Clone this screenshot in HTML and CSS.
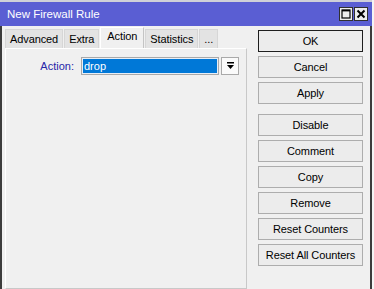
FILE: index.html
```html
<!DOCTYPE html>
<html>
<head>
<meta charset="utf-8">
<link rel="stylesheet" href="styles.css">
</head>
<body>
<div class="window">
  <div class="titlebar">
    <span class="title">New Firewall Rule</span>
    <div class="tb-buttons">
      <span class="tb-btn"><svg width="10" height="10" viewBox="0 0 10 10"><rect x="1" y="1" width="8" height="8" fill="none" stroke="#000" stroke-width="1.2"/><line x1="1" y1="1.6" x2="9" y2="1.6" stroke="#000" stroke-width="1.6"/></svg></span>
      <span class="tb-btn"><svg width="10" height="10" viewBox="0 0 10 10"><path d="M1.5 1.5 L8.5 8.5 M8.5 1.5 L1.5 8.5" stroke="#000" stroke-width="2"/></svg></span>
    </div>
  </div>
  <div class="body">
    <div class="left">
      <div class="tabs">
        <span class="tab">Advanced</span>
        <span class="tab">Extra</span>
        <span class="tab active">Action</span>
        <span class="tab">Statistics</span>
        <span class="tab">...</span>
      </div>
      <div class="panel">
        <div class="row">
          <span class="label">Action:</span>
          <div class="field">drop</div>
          <span class="drop-btn"><svg width="9" height="8" viewBox="0 0 9 8"><rect x="1" y="0" width="7" height="1.5" fill="#000"/><path d="M1 3 L8 3 L4.5 7 Z" fill="#000"/></svg></span>
        </div>
      </div>
    </div>
    <div class="right">
      <div class="btn default">OK</div>
      <div class="btn">Cancel</div>
      <div class="btn">Apply</div>
      <div class="btn group">Disable</div>
      <div class="btn">Comment</div>
      <div class="btn">Copy</div>
      <div class="btn">Remove</div>
      <div class="btn">Reset Counters</div>
      <div class="btn">Reset All Counters</div>
    </div>
  </div>
</div>
</body>
</html>
```

FILE: styles.css
```css
html, body {
  margin: 0;
  padding: 0;
}
body {
  background: #f4f4f4;
  font-family: "Liberation Sans", Arial, sans-serif;
  font-size: 11px;
  color: #000;
}
.window {
  width: 372px;
  height: 289px;
  box-sizing: border-box;
  border-top: 2px solid #cfd0d8;
  display: flex;
  flex-direction: column;
  overflow: hidden;
}
.titlebar {
  height: 24px;
  flex: none;
  background: #5a5ed3;
  display: flex;
  align-items: center;
  justify-content: space-between;
  padding: 0 4px 0 7px;
  color: #fff;
}
.title {
  font-size: 11.5px;
}
.tb-buttons {
  display: flex;
  gap: 1px;
}
.tb-btn {
  width: 14px;
  height: 14px;
  box-sizing: border-box;
  background: #ececec;
  border: 1px solid #303030;
  display: flex;
  align-items: center;
  justify-content: center;
}
.tb-btn svg {
  display: block;
}
.body {
  flex: 1;
  display: flex;
  background: #f0f0f0;
  border-left: 2px solid #3c3c3c;
  border-right: 2px solid #3c3c3c;
}
.left {
  width: 242px;
  margin-left: 3px;
  display: flex;
  flex-direction: column;
}
.tabs {
  height: 22px;
  flex: none;
  display: flex;
  align-items: flex-end;
}
.tab {
  height: 19px;
  box-sizing: border-box;
  padding: 0 4px;
  margin-right: 1px;
  background: #e3e3e3;
  border: 1px solid #d6d6d6;
  border-bottom: none;
  line-height: 18px;
  letter-spacing: -0.1px;
}
.tab.active {
  height: 21px;
  padding: 0 6px;
  background: #f0f0f0;
  border-color: #ffffff #c4c4c4 #f0f0f0 #ffffff;
  line-height: 17px;
}
.panel {
  flex: 1;
  border: 1px solid;
  border-color: #ffffff #c8c8c8 #c8c8c8 #ffffff;
  padding-top: 8px;
}
.row {
  display: flex;
  align-items: center;
  height: 18px;
}
.label {
  width: 68px;
  text-align: right;
  color: #2727a8;
  margin-right: 7px;
}
.field {
  width: 138px;
  height: 18px;
  box-sizing: border-box;
  border: 1px solid #a9a9a9;
  background: #0078d7;
  color: #fff;
  padding-left: 2px;
  line-height: 16px;
  box-shadow: inset 0 0 0 1px #e8eef6;
}
.drop-btn {
  width: 18px;
  height: 18px;
  margin-left: 2px;
  box-sizing: border-box;
  border: 1px solid #a9a9a9;
  background: #fafafa;
  display: flex;
  align-items: center;
  justify-content: center;
}
.drop-btn svg {
  display: block;
}
.right {
  width: 105px;
  margin-left: 11px;
  padding-top: 4px;
  display: flex;
  flex-direction: column;
  gap: 4px;
}
.btn {
  height: 22px;
  box-sizing: border-box;
  border: 1px solid #adadad;
  background: #ececec;
  display: flex;
  align-items: center;
  justify-content: center;
  letter-spacing: -0.1px;
}
.btn.default {
  border-color: #1e1e1e;
}
.btn.group {
  margin-top: 6px;
}
```
